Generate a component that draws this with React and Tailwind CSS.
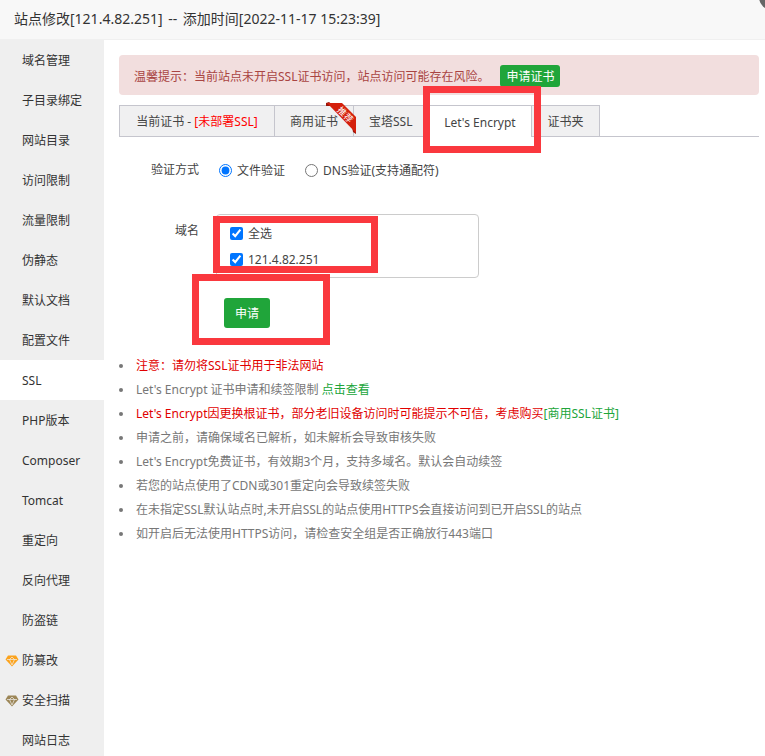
const menu = [
    { name: '域名管理' },
    { name: '子目录绑定' },
    { name: '网站目录' },
    { name: '访问限制' },
    { name: '流量限制' },
    { name: '伪静态' },
    { name: '默认文档' },
    { name: '配置文件' },
    { name: 'SSL', active: true },
    { name: 'PHP版本' },
    { name: 'Composer' },
    { name: 'Tomcat' },
    { name: '重定向' },
    { name: '反向代理' },
    { name: '防盗链' },
    { name: '防篡改', gem: 'text-[#fca31c]' },
    { name: '安全扫描', gem: 'text-[#9c8657]' },
    { name: '网站日志' },
];

const domains = ['全选', '121.4.82.251'];

function Gem({ className }) {
    return (
        <svg viewBox="0 0 28 24" className={className} aria-hidden="true">
            <path d="M6 1h16l5 8-13 14L1 9z" fill="currentColor" />
            <path d="M4 9h20M9 9l5 11 5-11M9 9l5-5 5 5" fill="none" stroke="#efefef" strokeWidth="1.4" />
        </svg>
    );
}

function Ribbon() {
    return (
        <svg viewBox="0 0 32 33" className="absolute -top-1 -right-1 z-10 h-[33px] w-8">
            <path d="M1 1l3-1 5 4H1z M31 27v5l-3-2-1-5z" fill="#9c1408" />
            <path d="M2 1h15l14 14v16z" fill="#d4200c" />
            <text x="18" y="15" fontSize="9" fill="#fff" textAnchor="middle" transform="rotate(45 18 15)">推荐</text>
        </svg>
    );
}

// red frame drawn over the part of the page to look at
function Mark({ className }) {
    return <div className={`pointer-events-none absolute z-20 border-7 border-[#fa383e] ${className}`} />;
}

function Tab({ active, className = 'px-[15px]', children }) {
    return (
        <button
            role="tab"
            aria-selected={!!active}
            className={`relative h-8 border-t border-r border-[#c5c5cd] pt-0.5 ${className} ${active ? 'bg-white' : 'border-b bg-[#f0f0f1]'}`}
        >
            {children}
        </button>
    );
}

export default function App() {
    return (
        <div className="flex h-screen flex-col overflow-hidden bg-white font-['Noto_Sans','Noto_Sans_CJK_SC',sans-serif] text-xs text-[#444]">
            <header className="relative h-10 shrink-0 border-b border-[#f0f0f0] bg-[#f8f8f8] px-3.5">
                <h1 className="text-sm leading-[38px] text-[#333]">
                    站点修改[121.4.82.251] <span className="mx-0.5">--</span> 添加时间[2022-11-17 15:23:39]
                </h1>
                <button aria-label="关闭" className="absolute -top-4 -right-5 size-[26px] rounded-full bg-[#666]" />
            </header>

            <div className="flex min-h-0 flex-1">
                <nav className="w-26 shrink-0 overflow-hidden bg-[#efefef]">
                    {menu.map(({ name, active, gem }) => (
                        <a
                            key={name}
                            href="#"
                            className={`relative block h-10 pl-[22px] leading-[42px] text-[#333] ${active ? 'bg-white' : ''}`}
                        >
                            {gem && <Gem className={`absolute top-[15px] left-[5px] h-3 w-3.5 ${gem}`} />}
                            {name}
                        </a>
                    ))}
                </nav>

                <main className="min-w-0 flex-1 pt-[15px] pr-1.5 pl-[15px]">
                    <div className="flex h-10 items-center gap-[11px] rounded bg-[#f2dede] px-[15px] pt-0.5 text-[#a94442]">
                        <span className="pt-0.5">温馨提示：当前站点未开启SSL证书访问，站点访问可能存在风险。</span>
                        <button className="h-[22px] rounded-[3px] bg-[#20a53a] px-1.5 pt-0.5 text-white">申请证书</button>
                    </div>

                    <div className="mt-2.5 flex" role="tablist">
                        <div className="flex border-l border-[#c5c5cd]">
                            <Tab className="w-[155px]">当前证书 - <span className="text-[#f00]">[未部署SSL]</span></Tab>
                            <Tab>商用证书<Ribbon /></Tab>
                            <Tab>宝塔SSL</Tab>
                            <Tab active className="w-26">
                                Let's Encrypt
                                <Mark className="-top-5 -right-2.5 -bottom-4 -left-[5px]" />
                            </Tab>
                            <Tab>证书夹</Tab>
                        </div>
                        <div className="flex-1 border-b border-[#c5c5cd]" />
                    </div>

                    <form className="pt-[23px]">
                        <fieldset className="flex h-5 items-center">
                            <legend className="float-left w-20 text-right">验证方式</legend>
                            <label className="ml-5 flex items-center gap-[5px]">
                                <input type="radio" name="verify" defaultChecked className="size-[13px]" />
                                <span className="pt-0.5">文件验证</span>
                            </label>
                            <label className="ml-5 flex items-center gap-[5px]">
                                <input type="radio" name="verify" className="size-[13px]" />
                                <span className="pt-0.5">DNS验证(支持通配符)</span>
                            </label>
                        </fieldset>

                        <div className="mt-[34px] flex">
                            <span id="domain-label" className="w-20 pt-[9px] text-right">域名</span>
                            <div
                                role="group"
                                aria-labelledby="domain-label"
                                className="relative ml-[17px] h-16 w-[263px] rounded border border-[#ccc] pt-[5px] pl-[13px]"
                            >
                                {domains.map((name) => (
                                    <label key={name} className="flex h-[26px] items-center gap-[5px]">
                                        <input type="checkbox" defaultChecked className="size-[13px]" />
                                        <span className="pt-0.5">{name}</span>
                                    </label>
                                ))}
                                <Mark className="top-px -left-1 h-[57px] w-[165px]" />
                            </div>
                        </div>

                        <div className="mt-5 ml-[105px] flex">
                            <div className="relative">
                                <button type="button" className="h-[30px] rounded-[3px] bg-[#20a53a] px-[11px] pt-0.5 text-white">申请</button>
                                <Mark className="-top-6 -left-8 h-[71px] w-[138px]" />
                            </div>
                        </div>
                    </form>

                    <ul className="mt-[26px] list-disc pl-[15px] leading-6 text-[#777] *:pl-0.5">
                        <li><span className="text-[#e10000]">注意：请勿将SSL证书用于非法网站</span></li>
                        <li>Let's Encrypt 证书申请和续签限制 <a href="#" className="text-[#20a53a]">点击查看</a></li>
                        <li>
                            <span className="text-[#e10000]">Let's Encrypt因更换根证书，部分老旧设备访问时可能提示不可信，考虑购买</span>
                            <a href="#" className="text-[#20a53a]">[商用SSL证书]</a>
                        </li>
                        <li>申请之前，请确保域名已解析，如未解析会导致审核失败</li>
                        <li>Let's Encrypt免费证书，有效期3个月，支持多域名。默认会自动续签</li>
                        <li>若您的站点使用了CDN或301重定向会导致续签失败</li>
                        <li>在未指定SSL默认站点时,未开启SSL的站点使用HTTPS会直接访问到已开启SSL的站点</li>
                        <li>如开启后无法使用HTTPS访问，请检查安全组是否正确放行443端口</li>
                    </ul>
                </main>
            </div>
        </div>
    );
}
